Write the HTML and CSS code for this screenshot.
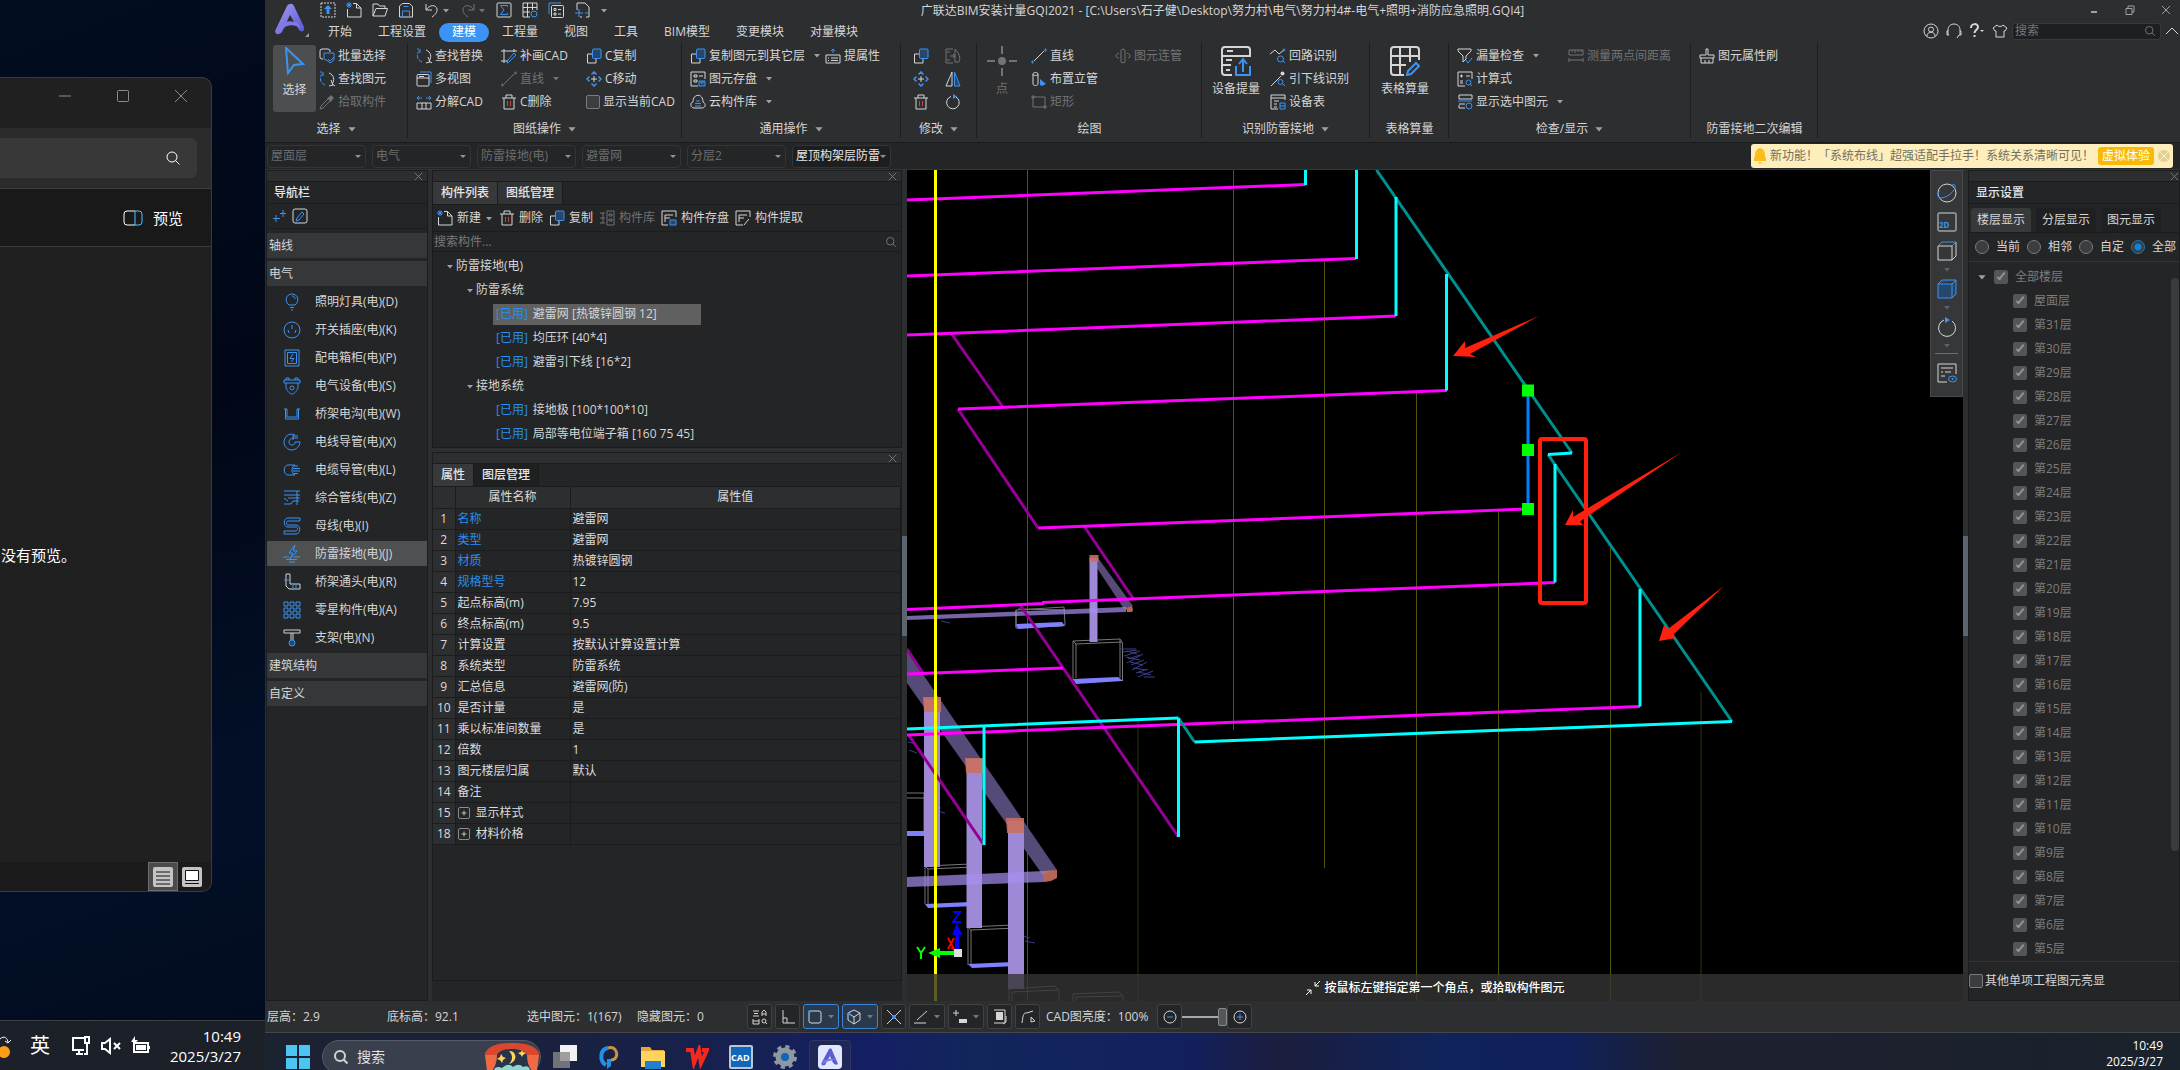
FILE: index.html
```html
<!DOCTYPE html>
<html lang="zh-CN">
<head>
    <meta charset="UTF-8">
    <meta name="viewport" content="width=device-width, initial-scale=1.0">
    <title>广联达BIM安装计量GQI2021</title>
    <link rel="stylesheet" href="styles.css">
</head>
<body>

    <!-- icon set -->
    <svg class="sprite" aria-hidden="true">
        <symbol id="i-caret" viewBox="0 0 8 5"><path class="fc" d="M1 1h6L4 4.500z"/></symbol>
        <symbol id="i-close" viewBox="0 0 16 16"><path d="M3 3l10 10M13 3L3 13"/></symbol>
        <symbol id="i-search" viewBox="0 0 16 16"><circle cx="7" cy="7" r="5"/><path d="M10.500 10.500l4 4"/></symbol>
        <symbol id="i-up" viewBox="0 0 16 16"><rect x="1" y="1" width="14" height="14" stroke-dasharray="2 1"/><path class="fb" d="M8 3l4 4H9.500v5h-3V7H4z"/></symbol>
        <symbol id="i-new" viewBox="0 0 16 16"><path d="M7 1.500h3.500L15 6v9H1.500V7M10.500 1.500V6H15"/><path class="b" d="M1 1l4 4M5 1L1 5M3 0v6M0 3h6"/></symbol>
        <symbol id="i-open" viewBox="0 0 16 16"><path d="M1 14V2h5l1.500 2H13v2.500M1 14l3-7.500h11.500L13 14z"/></symbol>
        <symbol id="i-save" viewBox="0 0 16 16"><path d="M1.500 15V4l3-2.500h7l3 3V15z"/><path class="b" d="M4.500 15V9h7v6M5.500 4.500h5"/></symbol>
        <symbol id="i-undo" viewBox="0 0 16 16"><path d="M2 2v6h6M2.500 7.500C5 3 12 2 13 7c.5 3-2 6-5 8"/></symbol>
        <symbol id="i-redo" viewBox="0 0 16 16"><path d="M14 2v6H8M13.500 7.500C11 3 4 2 3 7c-.5 3 2 6 5 8"/></symbol>
        <symbol id="i-sum" viewBox="0 0 16 16"><rect x="1" y="1" width="14" height="14" rx="1"/><path class="b" d="M11.500 5V3.500h-7L8 8l-3.500 4.500h7V11"/></symbol>
        <symbol id="i-grid" viewBox="0 0 16 16"><path d="M15 8V1H1v14h7M1 5.500h14M1 10h7M5.500 1v14M10.500 1v7"/><circle class="b" cx="12" cy="12" r="3"/></symbol>
        <symbol id="i-copylist" viewBox="0 0 16 16"><path class="b" d="M1 12V1h12"/><rect x="3.500" y="3.500" width="12" height="12" rx="1"/><path d="M6 6.500h2v2H6zM6 11h2v2H6zM10 7.500h3M10 12h3"/></symbol>
        <symbol id="i-addpage" viewBox="0 0 16 16"><path d="M3 8V1h8l4 4v10h-3M8 15H6"/><path class="b" d="M5 7v8M1 11h8M11 11h4"/></symbol>
        <symbol id="i-batch" viewBox="0 0 16 16"><path d="M4 11H3a2 2 0 0 1-2-2V3a2 2 0 0 1 2-2h6a2 2 0 0 1 2 2v1"/><path class="b" d="M5 5h10v7l-4 3-2-2-4-2zM9 11l2 2 4-4"/></symbol>
        <symbol id="i-find" viewBox="0 0 16 16"><path class="b" d="M6 14C1 12 0 7 3 3l1-1M4 5V1H1" stroke-dasharray="4 1"/><path d="M10 2c5 2 6 7 3 11l3 2M12 9l2 5-4 1"/></symbol>
        <symbol id="i-pick" viewBox="0 0 16 16"><path d="M9 5L2 12l-1 3 3-1 7-7"/><path class="fc" d="M8 4l4 4 1-2 2-2-3-3-2 2z"/></symbol>
        <symbol id="i-views" viewBox="0 0 16 16"><rect x="1" y="3.500" width="12" height="11.500" rx="1"/><path d="M1 7h12M3 5.500h5"/><path class="b" d="M4 1h11v11"/></symbol>
        <symbol id="i-split" viewBox="0 0 16 16"><path d="M1 9h14v6H1zM6 9v6M10 9v6"/><path class="b" d="M6 4H1M3 2L1 4l2 2M10 4h5M13 2l2 2-2 2"/></symbol>
        <symbol id="i-frame" viewBox="0 0 16 16"><path d="M3 1v14M0 3h16M13 1v3M0 13h7"/><path class="b" d="M13 5l2 2-7 7-2 1 1-3z"/></symbol>
        <symbol id="i-line" viewBox="0 0 16 16"><path d="M3 13L13 3"/><path class="b" d="M1 15h1v-2H1zM14 1h1v2h-1z"/></symbol>
        <symbol id="i-linegrey" viewBox="0 0 16 16"><path d="M3 13L13 3M1 15h1v-2H1zM14 1h1v2h-1z"/></symbol>
        <symbol id="i-del" viewBox="0 0 16 16"><path d="M1 4h14M3 4v11h10V4M5 4V1h6v3"/><path class="r" d="M6.500 7v5M9.500 7v5"/></symbol>
        <symbol id="i-copy" viewBox="0 0 16 16"><path d="M6 6H1.500v9H10v-4"/><rect class="b bf" x="6.500" y="1" width="8.500" height="9.500" rx="1"/></symbol>
        <symbol id="i-move" viewBox="0 0 16 16"><path d="M8 5v6M5 8h6"/><path class="b" stroke-width="1.500" d="M5.500 3.500L8 1l2.500 2.500M5.500 12.500L8 15l2.500-2.500M3.500 5.500L1 8l2.500 2.500M12.500 5.500L15 8l-2.500 2.500"/></symbol>
        <symbol id="i-store" viewBox="0 0 16 16"><path d="M15 8V1H1v14h7M4 4h3v2H4zM4 9h3v2H4zM9 5h4"/><path class="b bf" d="M9 10h6v5H9zM11 10v2h2v-2"/></symbol>
        <symbol id="i-cloud" viewBox="0 0 16 16"><path d="M4 14C0 14 0 8 3 8c0-9 10-9 10 0 3 1 3 6-1 6z"/><path class="b" d="M5 12h6M5 9.500h6M6 7h4"/></symbol>
        <symbol id="i-prop" viewBox="0 0 16 16"><path d="M1 7h14v8H1zM3 10h1M6 10h7M3 12.500h1M6 12.500h7"/><path class="b" d="M8 5V1M6 3l2-2 2 2"/></symbol>
        <symbol id="i-convert" viewBox="0 0 16 16"><path d="M8 1H1v14h7M5 8h5M8 6l2 2-2 2M2 4h3M2 12h3M10 1c4 4 6 9 4 13h-4V1z"/></symbol>
        <symbol id="i-mirror" viewBox="0 0 16 16"><path d="M7 1v14H1z"/><path class="b bf" d="M9.500 1v14H15z"/></symbol>
        <symbol id="i-rotate" viewBox="0 0 16 16"><path d="M6 2.500a6.300 6.300 0 1 0 5 .5"/><path class="fb" d="M8 0l4 2.500L8 5z"/></symbol>
        <symbol id="i-point" viewBox="0 0 30 30"><path d="M15 0v8M15 22v8M0 15h8M22 15h8"/><circle class="fc" cx="15" cy="15" r="4"/></symbol>
        <symbol id="i-riser" viewBox="0 0 16 16"><path d="M2 3c0-2 5-2 5 0v10c0 2-5 2-5 0zM2 3c0 2 5 2 5 0"/><path class="fb" d="M9 8l6 5-4 2-2-1z"/></symbol>
        <symbol id="i-rect" viewBox="0 0 16 16"><path d="M2 3h12v10H2zM1 2h2v2H1zM13 12h2v2h-2z"/></symbol>
        <symbol id="i-pipe" viewBox="0 0 16 16"><path d="M6 2c0-1 4-1 4 0v12c0 1-4 1-4 0zM4 5C0 6 0 10 4 10M12 5c4 1 4 5 1 5"/></symbol>
        <symbol id="i-device" viewBox="0 0 30 30"><path d="M11 29H4a3 3 0 0 1-3-3V4a3 3 0 0 1 3-3h22a3 3 0 0 1 3 3v7M1 10h28M1 19h9M6 5h6M5 14h6M5 24h4"/><path class="b" d="M15 20v9h14v-9M22 26V14M18 18l4-5 4 5"/></symbol>
        <symbol id="i-route" viewBox="0 0 16 16"><path d="M0 6l5-4 4 4 5-4"/><circle class="b" cx="14" cy="2" r="1"/><circle class="b" cx="10.500" cy="11" r="3"/><path class="b" d="M13 13l2 2"/></symbol>
        <symbol id="i-down" viewBox="0 0 16 16"><path d="M1 15L11 5"/><circle class="fc" cx="12.500" cy="2.500" r="2"/><circle class="b" cx="10.500" cy="11" r="2.500"/><path class="b" d="M13 13l2 2"/></symbol>
        <symbol id="i-sheet" viewBox="0 0 16 16"><path d="M15 6V1H1v14h7M1 4h14M4 7h5M4 10h3M4 13h3"/><path class="b" d="M10 9h5v6h-5zM10 12h5"/></symbol>
        <symbol id="i-table" viewBox="0 0 30 30"><path d="M29 14V4a3 3 0 0 0-3-3H4a3 3 0 0 0-3 3v22a3 3 0 0 0 3 3h10M1 10h28M1 19h15M10 1v28M20 1v15"/><path class="b" d="M26 17l3 3-8 8-4 1 1-4z"/></symbol>
        <symbol id="i-filter" viewBox="0 0 16 16"><path d="M1 1h13v2L9 8v3l-3 3V8L1 3z"/><path class="b" d="M9 12l2 3 4-5"/></symbol>
        <symbol id="i-calc" viewBox="0 0 16 16"><path d="M15 8V1H1v14h7M3 5h3M4.500 3.500v3M9 5h4M3 10h3M3 12h3"/><circle class="b" cx="11.500" cy="11.500" r="2.500"/><path class="b" d="M13 13l2 2"/></symbol>
        <symbol id="i-show" viewBox="0 0 16 16"><path d="M15 5H2V1h13zM8 10H2M8 14H2v-3"/><path class="b" d="M1 7h14"/><circle class="b" cx="12" cy="12" r="3"/></symbol>
        <symbol id="i-ruler" viewBox="0 0 16 16"><path d="M1 2h14v5H1zM4 2v2M7 2v3M10 2v2M13 2v2M1 12h14M1 10v4M15 10v4"/></symbol>
        <symbol id="i-brush" viewBox="0 0 16 16"><path d="M7 1h2v6h6v3H1V7h6zM2 10v5h12v-5M6 12v3M10 12v3"/></symbol>
        <symbol id="i-lib" viewBox="0 0 16 16"><path d="M8 1h7v14H8zM10 4h3v2h-3zM10 9h3v2h-3zM1 3h5M1 8h5M1 13h5M4 3v10"/></symbol>
        <symbol id="i-cstore" viewBox="0 0 16 16"><path d="M15 7V1H1v14h6M4 12V5h8M4 8h5"/><path class="b bf" d="M9 10h6v5H9z"/></symbol>
        <symbol id="i-cget" viewBox="0 0 16 16"><path d="M15 7V1H1v14h7M4 12V5h8M4 8h5M14 9l-5 6"/></symbol>
        <symbol id="i-plus2" viewBox="0 0 16 16"><path class="b" d="M5 7v7M2 10.500h7M12 2v7M9 5.500h6"/></symbol>
        <symbol id="i-edit" viewBox="0 0 16 16"><rect x="1" y="1" width="14" height="14" rx="2"/><path class="b" d="M10 4l2 2-5 6-3 1 1-3z"/></symbol>
        <symbol id="n-lamp" viewBox="0 0 18 18"><path d="M6 12C1 8 3 1 9 1s8 7 3 11zM7 14.500h4M8 17h2M9 3c2 0 3 1 3 3"/></symbol>
        <symbol id="n-socket" viewBox="0 0 18 18"><circle cx="9" cy="9" r="8"/><path d="M9 4v4M5 9l1 3M13 9l-1 3"/></symbol>
        <symbol id="n-box" viewBox="0 0 18 18"><path d="M2 1h14v16H2zM4.500 3.500h9v11h-9zM10 5L7 9.500h4L8 13"/></symbol>
        <symbol id="n-equip" viewBox="0 0 18 18"><path d="M1 3h16v3H1zM3 3V1h3v2M12 3V1h3v2M3 6v5c2 4 4 6 6 6s4-2 6-6V6"/><circle cx="9" cy="11" r="2"/></symbol>
        <symbol id="n-tray" viewBox="0 0 18 18"><path d="M1 4h3v8h10V4h3M2.500 4v10h13V4"/></symbol>
        <symbol id="n-wire" viewBox="0 0 18 18"><path d="M12 2C6-1 1 4 1 9s4 8 8 8 8-4 8-8h-5c0 2-1 3-3 3s-3-1-3-3 2-4 4-4h5M10 2v5M10 3h5"/></symbol>
        <symbol id="n-cable" viewBox="0 0 18 18"><path d="M12 4H5C0 4 0 14 5 14h7M12 4c-4 2-4 8 0 10M11 5h4M10 7.500h7M10 10h7M11 12.500h4"/></symbol>
        <symbol id="n-multi" viewBox="0 0 18 18"><path d="M1 2h16M1 6h16M5 9h12M1 9l4 3M1 15h7l2-3h6M14 2v14"/></symbol>
        <symbol id="n-bus" viewBox="0 0 18 18"><path d="M17 1H5C0 1 0 10 5 10h8c2 0 2 4 0 4H1v3h12c5 0 5-9 0-9H5C3 8 3 4 5 4h12z"/></symbol>
        <symbol id="n-bolt" viewBox="0 0 18 18"><path class="bf" d="M12 0L6 8h4l-3 6 7-8h-4z"/><path d="M0 12h6M11 12h6M3 14.500h11M6 17h6"/></symbol>
        <symbol id="n-elbow" viewBox="0 0 18 18"><path class="w" d="M3 5V1h4v10h10v5H6l-3-3z"/><path d="M1 7h7M10 10v7M13 11v5"/></symbol>
        <symbol id="n-parts" viewBox="0 0 18 18"><path d="M1 1h4v4H1zM7 1h4v4H7zM13 1h4v4h-4zM1 7h4v4H1zM7 7h4v4H7zM13 7h4v4h-4zM1 13h4v4H1zM7 13h4v4H7zM13 13h4v4h-4z"/></symbol>
        <symbol id="n-hanger" viewBox="0 0 18 18"><path class="w" d="M1 1h16v3H1zM8 4v7M10 4v7"/><circle class="bf" cx="9" cy="14" r="3"/></symbol>
    </svg>

    <div class="desktop">

        <!-- side monitor -->
        <div class="side-screen">
            <section class="preview-window">
                <header class="pw-title">
                    <button aria-label="最小化"><svg class="icon"><path d="M2 8h12"/></svg></button>
                    <button aria-label="最大化"><svg class="icon"><rect x="2.500" y="2.500" width="11" height="11" rx="1"/></svg></button>
                    <button aria-label="关闭"><svg class="icon"><path d="M2 2l12 12M14 2L2 14"/></svg></button>
                </header>
                <div class="pw-search">
                    <label class="pw-box"><input type="text" aria-label="搜索文件"><svg class="icon"><use href="#i-search"/></svg></label>
                </div>
                <div class="pw-bar">
                    <button class="pw-preview"><svg viewBox="0 0 20 16"><path d="M12 1H4a3 3 0 0 0-3 3v8a3 3 0 0 0 3 3h8"/><path class="cy" d="M12 1h4a3 3 0 0 1 3 3v8a3 3 0 0 1-3 3h-4z"/></svg>预览</button>
                </div>
                <p class="pw-empty">没有预览。</p>
                <footer class="pw-foot">
                    <button class="on" aria-label="详细信息"><svg viewBox="0 0 20 20"><rect class="pg" width="20" height="20" rx="2"/><path d="M3 5h14M3 9h14M3 13h14M3 17h14"/></svg></button>
                    <button aria-label="大图标"><svg viewBox="0 0 20 20"><rect class="pg" width="20" height="20" rx="2"/><path class="pw" d="M3.500 3.500h13v10h-13z"/><path d="M3 16.500h14"/></svg></button>
                </footer>
            </section>
            <div class="side-taskbar">
                <svg class="sync" viewBox="0 0 12 24"><path d="M0 5c4-4 8-1 8 4M5 7l3 2 3-3"/><circle cx="4" cy="18" r="6"/></svg>
                <span class="ime">英</span>
                <svg class="tray" viewBox="0 0 20 20"><path d="M13 2H2v12h11M5 18h7M8 14v4M14 1h4v6h-4zM16 7v11h-3"/></svg>
                <svg class="tray" viewBox="0 0 20 20"><path d="M1 7h3l5-4v14l-5-4H1zM13 7l6 6M19 7l-6 6"/></svg>
                <svg class="tray" viewBox="0 0 20 20"><path d="M3 7h14v9H3zM18 10v3"/><path class="solid" d="M5 9h10v5H5zM4 0L0 6h3L2 10l5-6H4z"/></svg>
                <time class="side-clock">10:49<br>2025/3/27</time>
            </div>
        </div>

        <!-- main application -->
        <div class="main-screen">
            <div class="app">
                <header class="topbar">
                    <svg class="logo" viewBox="0 0 36 36">
                        <defs><linearGradient id="lg" x1="0" y1="0" x2="1" y2="1"><stop offset="0" stop-color="#a99af0"/><stop offset="1" stop-color="#5456d6"/></linearGradient></defs>
                        <path fill="url(#lg)" d="M13 3c2-3 6-3 7 0l10 21c1 4-2 6-5 3L16 12 8 29c-3 4-9 2-6-3z"/>
                        <path fill="#7f78e6" d="M3 24c7-6 14-7 21-4l3 5c-8-4-15-4-21 4z"/>
                        <path fill="#999" d="M35 30v4h-4z"/>
                    </svg>
                    <div class="quick">
                        <button aria-label="上传"><svg class="icon"><use href="#i-up"/></svg></button>
                        <button aria-label="新建"><svg class="icon"><use href="#i-new"/></svg></button>
                        <button aria-label="打开"><svg class="icon"><use href="#i-open"/></svg></button>
                        <button aria-label="保存"><svg class="icon"><use href="#i-save"/></svg></button>
                        <button aria-label="撤销"><svg class="icon"><use href="#i-undo"/></svg><svg class="caret"><use href="#i-caret"/></svg></button>
                        <button aria-label="恢复" class="off"><svg class="icon"><use href="#i-redo"/></svg><svg class="caret"><use href="#i-caret"/></svg></button>
                        <button aria-label="汇总"><svg class="icon"><use href="#i-sum"/></svg></button>
                        <button aria-label="报表"><svg class="icon"><use href="#i-grid"/></svg></button>
                        <button aria-label="列表"><svg class="icon"><use href="#i-copylist"/></svg></button>
                        <button aria-label="添加"><svg class="icon"><use href="#i-addpage"/></svg></button>
                        <button aria-label="自定义快速访问"><svg class="caret"><use href="#i-caret"/></svg></button>
                    </div>
                    <h1 class="app-title">广联达BIM安装计量GQI2021 - [C:\Users\石子健\Desktop\努力村\电气\努力村4#-电气+照明+消防应急照明.GQI4]</h1>
                    <div class="win-btns">
                        <button aria-label="最小化"><svg viewBox="0 0 10 10"><path d="M2 7h6" stroke-width="2"/></svg></button>
                        <button aria-label="还原"><svg viewBox="0 0 10 10"><path d="M3 3V1h6v6H7M1 3.500h6v6H1z"/></svg></button>
                        <button aria-label="关闭"><svg viewBox="0 0 10 10"><path d="M1 1l8 8M9 1L1 9"/></svg></button>
                    </div>
                    <nav class="tabs">
                        <button>开始</button>
                        <button>工程设置</button>
                        <button class="active">建模</button>
                        <button>工程量</button>
                        <button>视图</button>
                        <button>工具</button>
                        <button>BIM模型</button>
                        <button>变更模块</button>
                        <button>对量模块</button>
                    </nav>
                    <div class="utils">
                        <button aria-label="账户"><svg class="icon"><circle cx="8" cy="8" r="7"/><circle cx="8" cy="6.500" r="2.500"/><path d="M4 13c0-5 8-5 8 0"/></svg></button>
                        <button aria-label="客服"><svg class="icon"><path d="M2 12V7c0-8 12-8 12 0v5M2 8H1v4h2M14 8h1v4h-2l-2 3"/></svg></button>
                        <button aria-label="帮助"><svg class="icon"><path d="M2 5c0-5 7-5 7-1 0 3-3.500 3-3.500 6M5.500 12v2" stroke-width="2"/><path class="fc" d="M11 7h4l-2 2z"/></svg></button>
                        <button aria-label="皮肤"><svg class="icon"><path d="M5 2c1 2 5 2 6 0l4 3-2 3h-1v6H4V8H3L1 5z"/></svg></button>
                        <label class="app-search"><input type="text" placeholder="搜索" aria-label="搜索"><svg class="icon" viewBox="0 0 16 16"><use href="#i-search"/></svg></label>
                        <button aria-label="折叠"><svg class="icon"><path d="M2 11l6-6 6 6"/></svg></button>
                    </div>
                </header>

                <div class="ribbon">
                    <section class="group g-select">
                        <div class="tools">
                            <button class="big active"><svg class="cursor" viewBox="0 0 30 30"><path d="M6 1l17 16-9 1-6 8z"/></svg>选择</button>
                            <button><svg class="icon"><use href="#i-batch"/></svg>批量选择</button>
                            <button><svg class="icon"><use href="#i-find"/></svg>查找图元</button>
                            <button class="off"><svg class="icon"><use href="#i-pick"/></svg>拾取构件</button>
                        </div>
                        <h2>选择<svg class="caret lg"><use href="#i-caret"/></svg></h2>
                    </section>
                    <section class="group g-draw">
                        <div class="tools">
                            <button><svg class="icon"><use href="#i-find"/></svg>查找替换</button>
                            <button><svg class="icon"><use href="#i-views"/></svg>多视图</button>
                            <button><svg class="icon"><use href="#i-split"/></svg>分解CAD</button>
                            <button><svg class="icon"><use href="#i-frame"/></svg>补画CAD</button>
                            <button class="off"><svg class="icon"><use href="#i-linegrey"/></svg>直线<svg class="caret"><use href="#i-caret"/></svg></button>
                            <button><svg class="icon"><use href="#i-del"/></svg>C删除</button>
                            <button><svg class="icon"><use href="#i-copy"/></svg>C复制</button>
                            <button><svg class="icon"><use href="#i-move"/></svg>C移动</button>
                            <label class="check"><input type="checkbox">显示当前CAD</label>
                        </div>
                        <h2>图纸操作<svg class="caret lg"><use href="#i-caret"/></svg></h2>
                    </section>
                    <section class="group g-common">
                        <div class="tools">
                            <button><svg class="icon"><use href="#i-copy"/></svg>复制图元到其它层<svg class="caret"><use href="#i-caret"/></svg></button>
                            <button><svg class="icon"><use href="#i-store"/></svg>图元存盘<svg class="caret"><use href="#i-caret"/></svg></button>
                            <button><svg class="icon"><use href="#i-cloud"/></svg>云构件库<svg class="caret"><use href="#i-caret"/></svg></button>
                            <button><svg class="icon"><use href="#i-prop"/></svg>提属性</button>
                        </div>
                        <h2>通用操作<svg class="caret lg"><use href="#i-caret"/></svg></h2>
                    </section>
                    <section class="group g-modify">
                        <div class="tools">
                            <button aria-label="复制"><svg class="icon"><use href="#i-copy"/></svg></button>
                            <button aria-label="移动"><svg class="icon"><use href="#i-move"/></svg></button>
                            <button aria-label="删除"><svg class="icon"><use href="#i-del"/></svg></button>
                            <button aria-label="转换" class="off"><svg class="icon"><use href="#i-convert"/></svg></button>
                            <button aria-label="镜像"><svg class="icon"><use href="#i-mirror"/></svg></button>
                            <button aria-label="旋转"><svg class="icon"><use href="#i-rotate"/></svg></button>
                        </div>
                        <h2>修改<svg class="caret lg"><use href="#i-caret"/></svg></h2>
                    </section>
                    <section class="group g-paint">
                        <div class="tools">
                            <button class="big off"><svg><use href="#i-point"/></svg>点</button>
                            <button><svg class="icon"><use href="#i-line"/></svg>直线</button>
                            <button><svg class="icon"><use href="#i-riser"/></svg>布置立管</button>
                            <button class="off"><svg class="icon"><use href="#i-rect"/></svg>矩形</button>
                            <button class="off"><svg class="icon"><use href="#i-pipe"/></svg>图元连管</button>
                        </div>
                        <h2>绘图</h2>
                    </section>
                    <section class="group g-detect">
                        <div class="tools">
                            <button class="big"><svg><use href="#i-device"/></svg>设备提量</button>
                            <button><svg class="icon"><use href="#i-route"/></svg>回路识别</button>
                            <button><svg class="icon"><use href="#i-down"/></svg>引下线识别</button>
                            <button><svg class="icon"><use href="#i-sheet"/></svg>设备表</button>
                        </div>
                        <h2>识别防雷接地<svg class="caret lg"><use href="#i-caret"/></svg></h2>
                    </section>
                    <section class="group g-table">
                        <div class="tools">
                            <button class="big"><svg><use href="#i-table"/></svg>表格算量</button>
                        </div>
                        <h2>表格算量</h2>
                    </section>
                    <section class="group g-check">
                        <div class="tools">
                            <button><svg class="icon"><use href="#i-filter"/></svg>漏量检查<svg class="caret"><use href="#i-caret"/></svg></button>
                            <button><svg class="icon"><use href="#i-calc"/></svg>计算式</button>
                            <button><svg class="icon"><use href="#i-show"/></svg>显示选中图元<svg class="caret"><use href="#i-caret"/></svg></button>
                            <button class="off"><svg class="icon"><use href="#i-ruler"/></svg>测量两点间距离</button>
                        </div>
                        <h2>检查/显示<svg class="caret lg"><use href="#i-caret"/></svg></h2>
                    </section>
                    <section class="group g-brush">
                        <div class="tools">
                            <button><svg class="icon"><use href="#i-brush"/></svg>图元属性刷</button>
                        </div>
                        <h2>防雷接地二次编辑</h2>
                    </section>
                </div>

                <div class="context">
                    <div class="combo"><select aria-label="楼层" disabled><option>屋面层</option></select></div>
                    <div class="combo"><select aria-label="专业" disabled><option>电气</option></select></div>
                    <div class="combo"><select aria-label="构件类型" disabled><option>防雷接地(电)</option></select></div>
                    <div class="combo"><select aria-label="构件" disabled><option>避雷网</option></select></div>
                    <div class="combo"><select aria-label="分层" disabled><option>分层2</option></select></div>
                    <div class="combo"><select aria-label="图纸"><option>屋顶构架层防雷</option></select></div>
                    <div class="notice">
                        <svg class="bell" viewBox="0 0 12 16"><path d="M6 0c4 1 5 4 5 8l1 3v2H0v-2l1-3c0-4 1-7 5-8zM4 14h4l-2 2z"/></svg>
                        <span>新功能！「系统布线」超强适配手拉手！系统关系清晰可见！</span>
                        <button class="try">虚拟体验</button>
                        <button class="dismiss" aria-label="关闭"><svg class="icon" viewBox="0 0 16 16"><use href="#i-close"/></svg></button>
                    </div>
                </div>

                <main class="work">
                    <aside class="panel nav">
                        <div class="strip"><button aria-label="关闭"><svg class="icon" viewBox="2 2 12 12"><path d="M3 3l10 10M13 3L3 13"/></svg></button></div>
                        <h2 class="panel-title">导航栏</h2>
                        <div class="nav-tools">
                            <button aria-label="展开"><svg class="icon"><use href="#i-plus2"/></svg></button>
                            <button aria-label="编辑"><svg class="icon"><use href="#i-edit"/></svg></button>
                        </div>
                        <div class="nav-list">
                            <button class="cat">轴线</button>
                            <button class="cat">电气</button>
                            <button><svg><use href="#n-lamp"/></svg>照明灯具(电)(D)</button>
                            <button><svg><use href="#n-socket"/></svg>开关插座(电)(K)</button>
                            <button><svg><use href="#n-box"/></svg>配电箱柜(电)(P)</button>
                            <button><svg><use href="#n-equip"/></svg>电气设备(电)(S)</button>
                            <button><svg><use href="#n-tray"/></svg>桥架电沟(电)(W)</button>
                            <button><svg><use href="#n-wire"/></svg>电线导管(电)(X)</button>
                            <button><svg><use href="#n-cable"/></svg>电缆导管(电)(L)</button>
                            <button><svg><use href="#n-multi"/></svg>综合管线(电)(Z)</button>
                            <button><svg><use href="#n-bus"/></svg>母线(电)(I)</button>
                            <button class="active"><svg><use href="#n-bolt"/></svg>防雷接地(电)(J)</button>
                            <button><svg><use href="#n-elbow"/></svg>桥架通头(电)(R)</button>
                            <button><svg><use href="#n-parts"/></svg>零星构件(电)(A)</button>
                            <button><svg><use href="#n-hanger"/></svg>支架(电)(N)</button>
                            <button class="cat">建筑结构</button>
                            <button class="cat">自定义</button>
                        </div>
                    </aside>

                    <div class="middle">
                        <section class="panel components">
                            <div class="strip"><button aria-label="关闭"><svg class="icon" viewBox="2 2 12 12"><path d="M3 3l10 10M13 3L3 13"/></svg></button></div>
                            <div class="panel-tabs"><button class="active">构件列表</button><button class="second">图纸管理</button></div>
                            <div class="comp-tools">
                                <button class="new"><svg class="icon"><use href="#i-new"/></svg>新建<svg class="caret"><use href="#i-caret"/></svg></button>
                                <button><svg class="icon"><use href="#i-del"/></svg>删除</button>
                                <button><svg class="icon"><use href="#i-copy"/></svg>复制</button>
                                <button class="off"><svg class="icon"><use href="#i-lib"/></svg>构件库</button>
                                <button><svg class="icon"><use href="#i-cstore"/></svg>构件存盘</button>
                                <button><svg class="icon"><use href="#i-cget"/></svg>构件提取</button>
                            </div>
                            <label class="comp-search"><input type="text" placeholder="搜索构件..." aria-label="搜索构件"><svg class="icon" viewBox="0 0 16 16"><use href="#i-search"/></svg></label>
                            <ul class="tree">
                                <li class="l1"><svg class="caret"><use href="#i-caret"/></svg>防雷接地(电)</li>
                                <li class="l2"><svg class="caret"><use href="#i-caret"/></svg>防雷系统</li>
                                <li class="l3"><span class="node active"><i>[已用]</i>避雷网 [热镀锌圆钢 12]</span></li>
                                <li class="l3"><span class="node"><i>[已用]</i>均压环 [40*4]</span></li>
                                <li class="l3"><span class="node"><i>[已用]</i>避雷引下线 [16*2]</span></li>
                                <li class="l2"><svg class="caret"><use href="#i-caret"/></svg>接地系统</li>
                                <li class="l3"><span class="node"><i>[已用]</i>接地极 [100*100*10]</span></li>
                                <li class="l3"><span class="node"><i>[已用]</i>局部等电位端子箱 [160 75 45]</span></li>
                            </ul>
                        </section>
                        <section class="panel props">
                            <div class="strip"><button aria-label="关闭"><svg class="icon" viewBox="2 2 12 12"><path d="M3 3l10 10M13 3L3 13"/></svg></button></div>
                            <div class="panel-tabs"><button class="active">属性</button><button>图层管理</button></div>
                            <table>
                                <thead>
                                    <tr><th class="num"></th><th class="name">属性名称</th><th>属性值</th></tr>
                                </thead>
                                <tbody>
                                    <tr class="key"><th>1</th><td>名称</td><td>避雷网</td></tr>
                                    <tr class="key"><th>2</th><td>类型</td><td>避雷网</td></tr>
                                    <tr class="key"><th>3</th><td>材质</td><td>热镀锌圆钢</td></tr>
                                    <tr class="key"><th>4</th><td>规格型号</td><td>12</td></tr>
                                    <tr><th>5</th><td>起点标高(m)</td><td>7.95</td></tr>
                                    <tr><th>6</th><td>终点标高(m)</td><td>9.5</td></tr>
                                    <tr><th>7</th><td>计算设置</td><td>按默认计算设置计算</td></tr>
                                    <tr><th>8</th><td>系统类型</td><td>防雷系统</td></tr>
                                    <tr><th>9</th><td>汇总信息</td><td>避雷网(防)</td></tr>
                                    <tr><th>10</th><td>是否计量</td><td>是</td></tr>
                                    <tr><th>11</th><td>乘以标准间数量</td><td>是</td></tr>
                                    <tr><th>12</th><td>倍数</td><td>1</td></tr>
                                    <tr><th>13</th><td>图元楼层归属</td><td>默认</td></tr>
                                    <tr><th>14</th><td>备注</td><td></td></tr>
                                    <tr><th>15</th><td><button class="expand" aria-label="展开"><svg viewBox="0 0 12 12"><path d="M3 6h6M6 3v6"/></svg></button>显示样式</td><td></td></tr>
                                    <tr><th>18</th><td><button class="expand" aria-label="展开"><svg viewBox="0 0 12 12"><path d="M3 6h6M6 3v6"/></svg></button>材料价格</td><td></td></tr>
                                </tbody>
                            </table>
                        </section>
                    </div>

                    <div class="splitter"></div>

                    <div class="canvas">
                        <!-- model space, drawn in screen units -->
                        <svg class="scene" viewBox="907 169 1056 832" preserveAspectRatio="xMinYMin slice">
                            <g class="axis">
                                <path d="M1027.500 169V1001M1233.500 169V729M1324.500 260V867M1416.500 392V1001M1498.500 508V1001M1610.500 547V1001"/>
                                <path class="dim" d="M1138 720V1001M1701 691V1001"/>
                            </g>
                            <g class="wire">
                                <path d="M1016 609l48-3 1 18-3 1-46 2zM1016 609v17M1018 608l47 1"/>
                                <path d="M1073 640l47-2 2.500 4v38M1073 640v40M1076 643v34M1073 640l3 3 46-2M1120 638v39"/>
                                <path d="M907 792h17v39M907 797h19v33M924 792l2 5"/>
                                <path d="M925 865l46-2 4 3v39M925 865v38M928 868v36M925 865l3 3 46-2M971 863v38"/>
                                <path d="M968 926l45-2 4 3v38M968 926v38M971 929v36M968 926l3 3 46-2M1013 924v38"/>
                                <path d="M1009 1001v-13l46-3 4 4v12M1012 1001v-10l46-2M1073 1001v-8l46-2 4 4v6M1076 1001v-5l46-1"/>
                            </g>
                            <g class="base">
                                <path d="M1016 623l46-2 3 4-47 3zM1073 678l45-2 5 4-47 3zM907 830h19v5h-19zM925 903l45-2 5 4-47 2zM968 963l45-2 4 4-45 2z"/>
                            </g>
                            <g class="scribble">
                                <path d="M1119 648h17M1123 651l14-2M1124 655l16-5M1128 658l12-4M1127 662l16-9M1131 664l13-5M1132 669l15-8M1136 672l12-4M1138 676l15-6M1144 676h11M1127 650l10 3M1126 656l14 3M1130 661l13 3M1133 667l14 2M1138 671l13 3M941 620l9 2M908 741l8 2M909 749l8 3M932 806l9 1M937 810l8 2M1022 935l8 2M1025 940l10 2"/>
                            </g>
                            <path class="beam" d="M907 650L1057 869 1042 873 907 682z"/>
                            <path class="beam" d="M1098 557L1133 605 1124 608 1097 567z"/>
                            <path class="pipe" d="M1089.500 557h8v84h-8zM924 698h16v168h-16zM966.500 758h15.500v169h-15.500zM1008 820h16v168h-16z"/>
                            <path class="pipe clear" d="M907 615l219-9v5l-219 8zM907 876l137-6v11l-137 5z"/>
                            <path class="joint" d="M1089.500 554h9v7h-9zM1126 607l6-2 1 4-1 2h-5zM923 696h18v15h-17zM965 757h18v15h-17zM1006 817h18v15h-17zM1043 870l14-1v8l-6 3-7 1z"/>
                            <g class="dark-line">
                                <path d="M951 332L1003.500 407M958 408L1038 527M1084 525L1133.500 598M1019.500 603L1178.500 836M907 648L923 672M908 733L984 844"/>
                            </g>
                            <g class="magenta">
                                <path d="M907 199L1305.500 183.500M907 275L1356 257.500M907 334L1396 315M958 408L1447 389.500M1038 527L1528 508M907 608.500L1044 602.500M1042 601.500L1555 581.500M907 673L1063 667M907 734L1640 705.500"/>
                            </g>
                            <g class="teal">
                                <path d="M1376.500 169L1572 452M1548 453.500L1732 720.500M1178.500 717L1194.500 741"/>
                            </g>
                            <g class="cyan">
                                <path d="M1305.500 169V184M1356.500 169V258M1396 196V315M1446.500 273V389.500M1555 463V581.500M1640 588V705.500M984 726V844M1178.500 717V836"/>
                                <path d="M907 728L1178.500 717M1194.500 741L1732 720.500M1548 453.500L1572 452"/>
                            </g>
                            <path class="yellow" d="M935.500 169V1001"/>
                            <path class="picked" d="M1528 390V508"/>
                            <path class="grip" d="M1522 383.500h12v12h-12zM1522 443h12v12h-12zM1522 502h12v12h-12z"/>
                            <rect class="mark" x="1540" y="438" width="46" height="164" rx="2"/>
                            <g class="arrow">
                                <path d="M1453 355L1465 340V347L1539 315 1470 353 1476 356z"/>
                                <path d="M1565 524L1573 509V516L1682 451 1580 520.500 1583 524z"/>
                                <path d="M1659 640L1664 624 1668 628 1724 585 1673 634 1676 637z"/>
                            </g>
                            <g class="gizmo">
                                <path stroke="#f00" stroke-width="2" d="M956 950l-5-3M948 937l6 11M954 937l-6 11"/>
                                <path stroke="#00f" stroke-width="4" d="M957 948V932"/><path fill="#00f" d="M952 934l5-12 5 12z"/>
                                <path stroke="#0f0" stroke-width="4" d="M954 952H938"/><path fill="#0f0" d="M940 947l-12 5 12 5z"/>
                                <rect x="954" y="948" width="8" height="8" fill="#ddd"/>
                                <path stroke="#00f" stroke-width="2" d="M953 911h7l-7 10h8"/>
                                <path stroke="#0f0" stroke-width="2" d="M917 946l4 6 4-6M921 952v6"/>
                            </g>
                        </svg>
                        <div class="viewtools">
                            <button aria-label="动态观察"><svg viewBox="0 0 20 20"><circle cx="10" cy="10" r="9"/><path class="b" d="M2 8C-2 17 6 16 12 12s9-12 3-10"/></svg></button>
                            <button aria-label="二维"><svg viewBox="0 0 20 20"><rect x="1" y="1" width="18" height="18" rx="1"/><text x="2" y="16">2D</text></svg></button>
                            <button aria-label="视角"><svg viewBox="0 0 20 20"><path d="M1 5h14v14H1zM15 19l4-4V1"/><path class="b" d="M1 5l4-4h14l-4 4"/></svg></button>
                            <svg class="caret"><use href="#i-caret"/></svg>
                            <button aria-label="显示样式"><svg viewBox="0 0 20 20"><path class="b bf" d="M1 5h14v14H1zM15 19l4-4V1L15 5M1 5l4-4h14"/></svg></button>
                            <svg class="caret"><use href="#i-caret"/></svg>
                            <button aria-label="旋转"><svg viewBox="0 0 20 20"><path d="M7 3a8.500 8.500 0 1 0 8 1"/><path class="fb" d="M8 0l5 3-5 3z"/></svg></button>
                            <svg class="caret"><use href="#i-caret"/></svg>
                            <hr>
                            <button aria-label="图元属性"><svg viewBox="0 0 20 20"><path d="M19 11V1H1v18h9M4 5h12M4 9h2M8 9h6M4 13h4"/><ellipse class="b" cx="15.500" cy="16" rx="4" ry="3"/><circle class="fb" cx="15.500" cy="16" r="1"/></svg></button>
                        </div>
                        <div class="prompt"><svg class="icon"><path d="M15 1l-5 5M10 2v4h4M1 15l5-5M2 10h4v4"/></svg>按鼠标左键指定第一个角点，或拾取构件图元</div>
                    </div>

                    <div class="splitter"></div>

                    <aside class="panel display">
                        <div class="strip"><button aria-label="关闭"><svg class="icon" viewBox="2 2 12 12"><path d="M3 3l10 10M13 3L3 13"/></svg></button></div>
                        <h2 class="panel-title">显示设置</h2>
                        <div class="display-tabs"><button class="active">楼层显示</button><button>分层显示</button><button>图元显示</button></div>
                        <div class="radios">
                            <label><input type="radio" name="range">当前</label>
                            <label><input type="radio" name="range">相邻</label>
                            <label><input type="radio" name="range">自定</label>
                            <label><input type="radio" name="range" checked>全部</label>
                        </div>
                        <div class="floors">
                            <label class="root"><svg class="caret lg"><use href="#i-caret"/></svg><input type="checkbox" checked disabled>全部楼层</label>
                            <label><input type="checkbox" checked disabled>屋面层</label>
                            <label><input type="checkbox" checked disabled>第31层</label>
                            <label><input type="checkbox" checked disabled>第30层</label>
                            <label><input type="checkbox" checked disabled>第29层</label>
                            <label><input type="checkbox" checked disabled>第28层</label>
                            <label><input type="checkbox" checked disabled>第27层</label>
                            <label><input type="checkbox" checked disabled>第26层</label>
                            <label><input type="checkbox" checked disabled>第25层</label>
                            <label><input type="checkbox" checked disabled>第24层</label>
                            <label><input type="checkbox" checked disabled>第23层</label>
                            <label><input type="checkbox" checked disabled>第22层</label>
                            <label><input type="checkbox" checked disabled>第21层</label>
                            <label><input type="checkbox" checked disabled>第20层</label>
                            <label><input type="checkbox" checked disabled>第19层</label>
                            <label><input type="checkbox" checked disabled>第18层</label>
                            <label><input type="checkbox" checked disabled>第17层</label>
                            <label><input type="checkbox" checked disabled>第16层</label>
                            <label><input type="checkbox" checked disabled>第15层</label>
                            <label><input type="checkbox" checked disabled>第14层</label>
                            <label><input type="checkbox" checked disabled>第13层</label>
                            <label><input type="checkbox" checked disabled>第12层</label>
                            <label><input type="checkbox" checked disabled>第11层</label>
                            <label><input type="checkbox" checked disabled>第10层</label>
                            <label><input type="checkbox" checked disabled>第9层</label>
                            <label><input type="checkbox" checked disabled>第8层</label>
                            <label><input type="checkbox" checked disabled>第7层</label>
                            <label><input type="checkbox" checked disabled>第6层</label>
                            <label><input type="checkbox" checked disabled>第5层</label>
                        </div>
                        <label class="check other"><input type="checkbox">其他单项工程图元亮显</label>
                    </aside>
                </main>

                <footer class="status">
                    <span class="s1">层高：2.9</span>
                    <span class="s2">底标高：92.1</span>
                    <span class="s3">选中图元：1(167)</span>
                    <span class="s3">隐藏图元：0</span>
                    <div class="modes">
                        <button aria-label="文字查找"><svg class="icon"><path d="M1 2h6M2 4.500h4M1 7h6M10 7V3l2-2 2 2v4M10 5h4M1 10v5h6v-5M1 12h6"/><circle cx="12" cy="12" r="2"/><path d="M13 13l2 2"/></svg></button>
                        <button aria-label="正交"><svg class="icon"><path d="M3 1v13h12M3 9h4v5"/></svg></button>
                        <button aria-label="选择框" class="on wide"><svg class="icon"><rect x="2" y="2" width="12" height="12" rx="2"/><circle class="fb" cx="2.500" cy="2.500" r="1.500"/></svg><svg class="caret"><use href="#i-caret"/></svg></button>
                        <button aria-label="三维捕捉" class="on wide"><svg class="icon"><path d="M8 1l6 3v7l-6 4-6-4V4zM8 8v7M8 8l6-4M8 8L2 4"/><circle class="fb" cx="2.500" cy="5" r="1.500"/></svg><svg class="caret"><use href="#i-caret"/></svg></button>
                        <button aria-label="交点"><svg class="icon"><path d="M1 1l14 14M15 1L1 15"/><circle class="fb" cx="8" cy="8" r="2"/></svg></button>
                        <button aria-label="角度" class="wide"><svg class="icon"><path d="M14 2L4 11M1 14h12"/></svg><svg class="caret"><use href="#i-caret"/></svg></button>
                        <button aria-label="动态输入" class="wide"><svg class="icon"><path d="M4 1v6M1 4h6"/><path class="fc" d="M7 10h8v4H7z"/></svg><svg class="caret"><use href="#i-caret"/></svg></button>
                        <button aria-label="剪贴"><svg class="icon"><path class="fc" d="M4 3h7v8H4z"/><path d="M2 1h11v13H2M14 7v6l-3 2"/></svg></button>
                        <button aria-label="折线"><svg class="icon"><path d="M2 14C3 8 3 3 7 4l6-2M11 8l4 4-4 1z"/></svg></button>
                    </div>
                    <label for="bright">CAD图亮度：100%</label>
                    <div class="zoomer">
                        <button aria-label="降低"><svg class="icon"><circle cx="8" cy="8" r="6"/><path class="b" d="M5 8h6"/></svg></button>
                        <input type="range" id="bright" min="0" max="100" value="100">
                        <button aria-label="提高"><svg class="icon"><circle cx="8" cy="8" r="6"/><path class="b" d="M5 8h6M8 5v6"/></svg></button>
                    </div>
                </footer>
            </div>

            <div class="taskbar">
                <button aria-label="开始"><svg viewBox="0 0 24 24"><path fill="#4cc5f5" d="M0 0h11v11H0zM13 0h11v11H13zM0 13h11v11H0zM13 13h11v11H13z"/></svg></button>
                <label class="task-search">
                    <svg class="icon"><use href="#i-search"/></svg>
                    <input type="text" placeholder="搜索" aria-label="任务栏搜索">
                    <svg class="doodle" viewBox="0 0 54 28">
                        <path fill="#2a3448" d="M8 3h38v25H8z"/><path fill="#d9472e" d="M0 10C4 2 14 0 27 0s23 2 27 10v4H43c-2-6-8-8-16-8s-14 2-16 8H0z"/>
                        <path fill="#ee6a45" d="M0 12h12c0 7-2 12-5 16H2zM54 12H42c0 7 2 12 5 16h5z"/>
                        <path fill="#8fd6d0" d="M9 28c0-4 4-5 8-3 5-4 8-4 11-1 4-3 7-3 10 0 4-2 7 0 7 4z"/>
                        <path fill="#ffd55a" d="M24 8c7-1 10 10 0 13 4-4 4-9 0-13zM16 11l2 3 3 1-3 2-1 3-2-3-3-1 3-2zM37 7l1 2 3 1-3 2-1 2-1-2-3-2 3-1z"/>
                    </svg>
                </label>
                <button aria-label="任务视图"><svg viewBox="0 0 24 24"><path fill="#f2f2f2" d="M7 0h17v16H7z"/><path fill="#888" fill-opacity=".8" d="M0 7h17v16H0z"/></svg></button>
                <button aria-label="助手"><svg viewBox="0 0 24 24"><path fill="none" stroke="#1e90e8" stroke-width="4" d="M9 20C2 16 3 4 11 3"/><path fill="none" stroke="#c69442" stroke-width="3" d="M11 3c10-3 12 12 3 12"/><path fill="#1e90e8" d="M10 14h4v7l-4 3z"/></svg></button>
                <button aria-label="文件资源管理器"><svg viewBox="0 0 24 24"><path fill="#e8a33a" d="M0 2h9l2 3h12v4H0z"/><path fill="#ffd35c" d="M0 6h24v16H0z"/><path fill="#1f7fd0" d="M4 16h16v8H4z"/></svg></button>
                <button aria-label="WPS"><svg viewBox="0 0 24 24"><path fill="none" stroke="#f5281e" stroke-width="4" d="M1 5h6l2 13 5-13 2 13 6-13h-5"/></svg></button>
                <button aria-label="CAD"><svg viewBox="0 0 24 24"><rect width="24" height="24" rx="2" fill="#b7c7d6"/><rect x="2" y="2" width="20" height="20" fill="#1267b8"/><text x="2" y="16" fill="#fff" font-size="9" font-weight="bold">CAD</text></svg></button>
                <button aria-label="设置"><svg viewBox="0 0 24 24"><circle cx="12" cy="12" r="10" fill="none" stroke="#8d98a3" stroke-width="4" stroke-dasharray="4 3.850"/><circle cx="12" cy="12" r="6.500" fill="none" stroke="#8d98a3" stroke-width="6"/><circle cx="12" cy="12" r="4" fill="#1166b8"/></svg></button>
                <button class="active" aria-label="广联达"><svg viewBox="0 0 24 24"><rect width="24" height="24" rx="4" fill="#e3e6ff"/><path fill="#5b5ed0" d="M11 4c2-1 3 0 3 1l6 14c-3 2-5 0-8-8l-5 9c-4 1-4-1-3-3z"/><path fill="#7d7be4" d="M4 17c5-4 9-4 14-2-5 0-9 1-13 4z"/></svg></button>
                <time class="clock">10:49<br>2025/3/27</time>
            </div>
        </div>
    </div>

</body>
</html>
```
FILE: styles.css
```css
*, *::before, *::after {
    box-sizing: border-box;
    margin: 0;
    padding: 0;
}

html, body {
    height: 100%;
    overflow: hidden;
}

body {
    font-family: "Open Sans", "Noto Sans CJK SC", sans-serif;
    font-size: 12px;
    line-height: 16px;
    color: #d6d6d6;
    background: #020817;
    white-space: nowrap;
}

button, input, select {
    font: inherit;
    color: inherit;
    background: none;
    border: none;
    outline: none;
}

button {
    display: flex;
    align-items: center;
}

h1, h2, th {
    font-size: 12px;
    font-weight: 400;
}

i {
    font-style: normal;
}

/* icons */
.sprite {
    position: absolute;
    width: 0;
    height: 0;
}

svg {
    display: block;
    flex: none;
    fill: none;
    stroke: currentColor;
}

.icon {
    width: 16px;
    height: 16px;
}

.caret {
    width: 8px;
    height: 5px;
    stroke: none;
    color: #a0a0a0;
}

.caret.lg {
    width: 10px;
    height: 6px;
}

.b {
    stroke: #3b94f5;
}

.r {
    stroke: #e03c3c;
}

.w {
    stroke: #d2d2d2;
}

.bf {
    fill: #24476b;
}

.fb {
    fill: #3b94f5;
    stroke: none;
}

.fc {
    fill: currentColor;
    stroke: none;
}

.off, .off .caret {
    color: #727374;
}

.desktop {
    display: flex;
    height: 100vh;
}

/* side monitor */
.side-screen {
    flex: 0 0 265px;
    display: flex;
    flex-direction: column;
    background: linear-gradient(160deg, #020d20 0%, #010717 40%, #031028 75%, #020b1e 100%);
}

.preview-window {
    flex: 1;
    display: flex;
    flex-direction: column;
    margin: 77px 53px 128px 0;
    background: #202020;
    border: 1px solid #3a3b3d;
    border-left: none;
    border-radius: 0 10px 10px 0;
    overflow: hidden;
    color: #fff;
}

.pw-title {
    display: flex;
    justify-content: flex-end;
    gap: 42px;
    height: 50px;
    padding: 0 22px 14px 0;
    color: #8c8c8c;
}

.pw-search {
    height: 61px;
    padding: 10px 14px 10px 0;
    background: #2b2b2b;
    border-bottom: 1px solid #3e3e3e;
}

.pw-box {
    display: flex;
    align-items: center;
    height: 40px;
    padding-right: 16px;
    background: #383838;
    border-radius: 0 6px 6px 0;
}

.pw-box input {
    flex: 1;
    min-width: 0;
}

.pw-bar {
    display: flex;
    justify-content: flex-end;
    height: 58px;
    padding-right: 28px;
    background: #191919;
    border-bottom: 1px solid #3a3a3a;
}

.pw-preview {
    gap: 10px;
    font-size: 15px;
}

.pw-preview svg {
    width: 20px;
    height: 16px;
}

.pw-preview .cy {
    stroke: #4cc2ff;
}

.pw-empty {
    flex: 1;
    padding: 298px 0 0 1px;
    font-size: 15px;
    line-height: 20px;
}

.pw-foot {
    display: flex;
    justify-content: flex-end;
    height: 29px;
    padding-right: 5px;
    background: #1b1b1b;
}

.pw-foot button {
    padding: 0 4px;
}

.pw-foot .on {
    background: #4b4b4b;
    border: 1px solid #6e6e6e;
}

.pw-foot svg {
    width: 20px;
    height: 20px;
    stroke: #111;
}

.pw-foot .pg {
    fill: #c4c4c4;
    stroke: none;
}

.pw-foot .pw {
    fill: #fff;
}

.side-taskbar {
    display: flex;
    align-items: center;
    height: 50px;
    padding-right: 24px;
    background: #1b2029;
    border-top: 1px solid #3b4048;
    color: #fff;
}

.sync {
    width: 12px;
    height: 24px;
    margin-right: 18px;
}

.sync circle {
    fill: #ff9c1a;
    stroke: none;
}

.ime {
    margin-right: 21px;
    font-size: 20px;
}

.tray {
    width: 20px;
    height: 20px;
    margin-right: 10px;
    stroke-width: 2;
}

.tray .solid {
    fill: #fff;
    stroke: none;
}

.side-clock {
    margin-left: auto;
    font-size: 15px;
    line-height: 20px;
    text-align: right;
}

/* main screen */
.main-screen {
    flex: 1;
    min-width: 0;
    display: flex;
    flex-direction: column;
}

.app {
    flex: 1;
    min-height: 0;
    display: flex;
    flex-direction: column;
    background: #2d2e30;
    border-bottom: 1px solid #45464a;
}

.topbar {
    display: grid;
    grid-template-columns: 1fr auto 1fr;
    grid-template-rows: 20px 22px;
}

.logo {
    grid-area: 1 / 1 / 3 / 2;
    width: 36px;
    height: 36px;
    margin: 3px 0 0 9px;
    stroke: none;
}

.quick {
    grid-area: 1 / 1;
    display: flex;
    gap: 10px;
    padding-left: 55px;
}

.quick .icon + .caret {
    margin-left: 2px;
}

.app-title {
    grid-area: 1 / 2;
    padding-top: 3px;
}

.win-btns {
    grid-area: 1 / 3;
    display: flex;
    justify-content: flex-end;
    gap: 26px;
    padding-right: 9px;
    color: #a0a0a0;
}

.win-btns svg {
    width: 10px;
    height: 10px;
}

.tabs {
    grid-area: 2 / 1 / 3 / 3;
    display: flex;
    align-items: center;
    padding: 2px 0 0 50px;
}

.tabs button {
    height: 19px;
    padding: 0 13px;
    border-radius: 10px;
}

.tabs .active {
    background: #3b94f5;
    color: #fff;
}

.utils {
    grid-area: 2 / 3;
    display: flex;
    align-items: center;
    justify-content: flex-end;
    gap: 7px;
}

.app-search {
    display: flex;
    align-items: center;
    width: 149px;
    height: 17px;
    margin: 0 -4px 0 -3px;
    padding: 0 4px 0 2px;
    background: #1e1f21;
    border: 1px solid #38393b;
    border-radius: 3px;
    color: #8a8b8c;
}

.app-search input {
    flex: 1;
    min-width: 0;
}

input::placeholder {
    color: #77787a;
    opacity: 1;
}

.app-search .icon, .comp-search .icon {
    width: 12px;
    height: 12px;
}

/* ribbon */
.ribbon {
    display: flex;
    height: 101px;
    border-bottom: 1px solid #1b1c1e;
}

.group {
    position: relative;
    display: flex;
    flex-direction: column;
    padding: 2px 0 4px 8px;
}

.group::after {
    content: "";
    position: absolute;
    top: 1px;
    right: 0;
    bottom: 4px;
    width: 1px;
    background: #1d1e20;
}

.tools {
    display: grid;
    grid-auto-flow: column;
    grid-template-rows: repeat(3, 23px);
    height: 69px;
}

.tools button, .tools .check {
    display: flex;
    align-items: center;
    gap: 3px;
}

.tools .caret {
    margin-left: 5px;
}

.tools .big {
    grid-row: 1 / 4;
    flex-direction: column;
    justify-self: start;
    gap: 5px;
    padding-top: 2px;
}

.big svg {
    width: 30px;
    height: 30px;
    stroke-width: 2;
}

.big.active {
    width: 43px;
    height: 67px;
    margin-top: 1px;
    background: #4d4e50;
    border-radius: 3px;
}

.cursor {
    stroke: #3b94f5;
}

.group h2 {
    display: flex;
    align-items: center;
    justify-content: center;
    gap: 6px;
    margin: 8px 8px 0 0;
}

.g-select { width: 143px; }
.g-draw { width: 274px; }
.g-common { width: 219px; }
.g-modify { width: 76px; }
.g-paint { width: 225px; }
.g-detect { width: 168px; }
.g-table { width: 79px; }
.g-check { width: 242px; }
.g-brush { width: 127px; }

.g-select .tools { grid-template-columns: 46px 1fr; }
.g-draw .tools { grid-template-columns: 85px 85px 1fr; }
.g-common .tools { grid-template-columns: 135px 1fr; }
.g-modify .tools { grid-template-columns: 32px 1fr; padding-left: 4px; }
.g-paint .tools { grid-template-columns: 44px 84px 1fr; padding-left: 2px; }
.g-detect .tools { grid-template-columns: 58px 1fr; padding-left: 2px; }
.g-table .tools { grid-template-columns: 62px; padding-left: 3px; }
.g-check .tools { grid-template-columns: 111px 1fr; }
.g-brush .tools { grid-template-columns: 1fr; }

input[type="checkbox"] {
    appearance: none;
    position: relative;
    flex: none;
    width: 14px;
    height: 14px;
    background: #3c3d3f;
    border: 1px solid #7a7b7c;
    border-radius: 2px;
}

input[type="checkbox"]:disabled {
    background: #545557;
    border-color: #545557;
}

input[type="checkbox"]:checked::after {
    content: "";
    position: absolute;
    left: 4px;
    top: 0;
    width: 4px;
    height: 9px;
    border: solid #929394;
    border-width: 0 2px 2px 0;
    transform: rotate(40deg);
}

/* context row */
.context {
    display: flex;
    align-items: center;
    gap: 6px;
    height: 26px;
    padding: 0 7px 0 2px;
    background: #242527;
}

.combo {
    position: relative;
    width: 99px;
}

.combo::after {
    content: "";
    position: absolute;
    right: 5px;
    top: 10px;
    border: 3px solid transparent;
    border-top-color: #909192;
}

.combo select {
    appearance: none;
    display: block;
    width: 100%;
    height: 23px;
    padding: 0 10px 0 3px;
    border: 1px solid #343537;
    border-radius: 4px;
    color: #e8e8e8;
    background: #1d1e20;
    overflow: hidden;
}

.combo select:disabled {
    color: #6c6d6e;
    background: #242527;
    opacity: 1;
}

.notice {
    display: flex;
    align-items: center;
    gap: 4px;
    height: 24px;
    margin-left: auto;
    padding: 0 3px;
    border-radius: 3px;
    background: #fdeebc;
    color: #75705f;
}

.bell {
    width: 12px;
    height: 16px;
    fill: #fbbd1c;
    stroke: none;
}

.try {
    height: 18px;
    padding: 0 4px;
    border-radius: 3px;
    background: #fab905;
    color: #fff;
}

.dismiss {
    border-radius: 50%;
    background: #e6cf93;
    color: #fff;
}

.dismiss .icon {
    width: 12px;
    height: 12px;
}

/* workspace */
.work {
    flex: 1;
    min-height: 0;
    display: flex;
    padding-left: 1px;
    border-top: 1px solid #343537;
}

.panel {
    display: flex;
    flex-direction: column;
    background: #242527;
    border: 1px solid #1b1c1e;
}

.strip {
    display: flex;
    justify-content: flex-end;
    height: 11px;
    padding-right: 4px;
    background: #2d2e30;
    border-bottom: 1px solid #1b1c1e;
    color: #8a8b8c;
}

.strip .icon {
    width: 9px;
    height: 9px;
}

.panel-title {
    height: 22px;
    padding: 3px 7px;
    border-bottom: 1px solid #1b1c1e;
    color: #e6e6e6;
    font-weight: 500;
}

.nav {
    width: 162px;
    margin-right: 4px;
}

.nav-tools {
    display: flex;
    gap: 5px;
    height: 25px;
    padding: 0 4px;
    margin-bottom: 4px;
    border-bottom: 1px solid #1b1c1e;
}

.nav-list button {
    gap: 14px;
    width: 100%;
    height: 25px;
    margin-bottom: 3px;
    padding-left: 16px;
}

.nav-list svg {
    width: 18px;
    height: 18px;
    color: #3b94f5;
}

.nav-list .cat {
    padding-left: 2px;
    background: #363739;
}

.nav-list .active {
    background: #4f5052;
}

.middle {
    width: 470px;
    display: flex;
    flex-direction: column;
    background: #2d2e30;
    border-bottom: 20px solid #242527;
}

.components {
    height: 278px;
    margin-bottom: 4px;
}

.panel-tabs {
    display: flex;
    height: 23px;
    border-bottom: 1px solid #1b1c1e;
}

.panel-tabs button {
    padding: 0 8px;
    border-right: 1px solid #1b1c1e;
    background: #1f2021;
    color: #e6e6e6;
    font-weight: 500;
}

.panel-tabs .active {
    background: #38393b;
}

.panel-tabs .second {
    background: #323335;
}

.comp-tools {
    display: flex;
    gap: 6px;
    height: 27px;
    padding: 0 4px;
    border-bottom: 1px solid #1b1c1e;
}

.comp-tools button {
    gap: 4px;
}

.comp-search {
    display: flex;
    align-items: center;
    height: 20px;
    padding: 0 4px 0 1px;
    border-bottom: 1px solid #1b1c1e;
    color: #8a8b8c;
}

.comp-search input {
    flex: 1;
}

.tree {
    padding-top: 2px;
    list-style: none;
}

.tree li {
    display: flex;
    align-items: center;
    gap: 2px;
    height: 24px;
}

.tree .l1 { padding-left: 13px; }
.tree .l2 { padding-left: 33px; }
.tree .l3 { padding-left: 60px; }

.node {
    display: flex;
    gap: 5px;
    width: 208px;
    height: 21px;
    padding: 2px 3px;
}

.node.active {
    background: #606060;
}

.node i, .key td:nth-child(2) {
    color: #2a8df0;
}

.props {
    flex: 1;
    min-height: 0;
}

table {
    width: 100%;
    border-collapse: collapse;
    table-layout: fixed;
}

th, td {
    height: 21px;
    padding: 0 2px;
    line-height: 16px;
    border: 1px solid #1b1c1e;
    border-top: none;
    border-left: none;
    text-align: left;
    color: #dcdcdc;
}

th {
    background: #2d2e30;
    text-align: center;
}

.num { width: 22px; }
.name { width: 115px; }

tbody th {
    padding: 0;
}

.expand {
    display: inline-flex;
    margin-right: 6px;
    border: 1px solid #8a8b8c;
    border-radius: 2px;
    vertical-align: middle;
}

.expand svg {
    width: 10px;
    height: 10px;
}

.splitter {
    display: flex;
    flex: 0 0 5px;
    flex-direction: column;
    justify-content: center;
    background: #2d2e30;
}

.splitter::before {
    content: "";
    height: 100px;
    background: #5a6570;
}

/* model canvas */
.canvas {
    position: relative;
    flex: 1;
    min-width: 0;
    background: #000;
    overflow: hidden;
}

.scene {
    width: 100%;
    height: 100%;
}

.axis { stroke: #56560a; }
.axis .dim { stroke: #33330a; }
.wire { stroke: #777; }
.base { fill: #7f7fff; stroke: none; }
.scribble { stroke: #3c3c8c; }
.beam { fill: #554a78; stroke: none; }
.pipe { fill: #9d89d6; stroke: none; }
.clear { fill: #a68ff0; fill-opacity: .7; }
.joint { fill: #c9705f; stroke: none; fill-opacity: .9; }
.dark-line { stroke: #960096; stroke-width: 3; }
.magenta { stroke: #f0f; stroke-width: 3; }
.teal { stroke: #008f8f; stroke-width: 3; }
.cyan { stroke: #0ff; stroke-width: 3; }
.yellow { stroke: #ff0; stroke-width: 3; }
.picked { stroke: #0080ff; stroke-width: 3; }
.grip { fill: #0f0; stroke: none; }
.mark { stroke: #ff2010; stroke-width: 4; }
.arrow { fill: #ff2010; stroke: none; }
.gizmo { stroke: none; stroke-width: 1; }

.viewtools {
    position: absolute;
    top: 0;
    right: 0;
    display: flex;
    flex-direction: column;
    align-items: center;
    gap: 9px;
    width: 33px;
    padding: 12px 0 13px;
    background: #363739;
    border: 1px solid #48494b;
}

.viewtools button svg {
    width: 20px;
    height: 20px;
}

.viewtools .caret {
    margin: -3px 0 -2px;
    color: #5a6270;
}

.viewtools hr {
    width: 23px;
    margin: -2px 0 0;
    border: none;
    border-top: 1px solid #6c6d6e;
}

.viewtools text {
    fill: #3b94f5;
    stroke: none;
    font-size: 8px;
    font-weight: 700;
}

.prompt {
    position: absolute;
    left: 0;
    right: 0;
    bottom: 0;
    display: flex;
    align-items: center;
    justify-content: center;
    gap: 3px;
    height: 27px;
    background: rgba(52, 52, 52, .8);
    color: #fff;
    font-weight: 500;
}

/* display settings */
.display {
    width: 212px;
    overflow: hidden;
}

.display .strip {
    padding-right: 0;
}

.display-tabs {
    display: flex;
    gap: 5px;
    height: 29px;
    padding: 4px 0 0 2px;
    border-bottom: 1px solid #1b1c1e;
}

.display-tabs button {
    padding: 0 6px;
    border-radius: 3px 3px 0 0;
    background: #1f2021;
}

.display-tabs .active {
    background: #38393b;
}

.radios {
    display: flex;
    align-items: center;
    gap: 7px;
    height: 29px;
    padding-left: 6px;
    border-bottom: 1px solid #343537;
}

.radios label {
    display: flex;
    align-items: center;
    gap: 7px;
}

input[type="radio"] {
    appearance: none;
    width: 14px;
    height: 14px;
    border: 1px solid #7a7b7c;
    border-radius: 50%;
    background: #3c3d3f;
}

input[type="radio"]:checked {
    border-color: #1c78c0;
    background: radial-gradient(#0d83da 3px, #3c3d3f 4px);
}

.floors {
    position: relative;
    flex: 1;
    min-height: 0;
    padding-top: 3px;
    overflow: hidden;
    color: #7c7d7e;
    border-bottom: 1px solid #343537;
}

/* scroll thumb */
.floors::after {
    content: "";
    position: absolute;
    top: 16px;
    right: 0;
    width: 8px;
    height: 82%;
    border-radius: 4px;
    background: #3a3b3d;
}

.floors label {
    display: flex;
    align-items: center;
    gap: 7px;
    height: 24px;
    padding-left: 44px;
}

.floors .root {
    padding-left: 8px;
}

.other {
    display: flex;
    align-items: center;
    gap: 2px;
    height: 38px;
}

/* status bar */
.status {
    display: flex;
    align-items: center;
    height: 31px;
    padding-left: 2px;
}

.s1 { width: 120px; }
.s2 { width: 140px; }
.s3 { width: 110px; }

.modes {
    display: flex;
    gap: 3px;
    margin-right: 6px;
}

.modes button, .zoomer button {
    justify-content: center;
    width: 25px;
    height: 25px;
    background: #242527;
    border: 1px solid #414244;
    border-radius: 3px;
}

.modes .wide {
    gap: 4px;
    width: 36px;
}

.modes .caret {
    color: #77787a;
}

.modes .on {
    background: #2a3a4c;
    border-color: #3b84da;
}

.zoomer {
    display: flex;
    align-items: center;
    margin-left: 9px;
}

input[type="range"] {
    appearance: none;
    width: 45px;
    height: 18px;
    background: linear-gradient(#a8a9aa, #a8a9aa) center / 100% 2px no-repeat;
}

input[type="range"]::-webkit-slider-thumb {
    appearance: none;
    width: 9px;
    height: 18px;
    border: 1px solid #8a8b8c;
    border-radius: 2px;
    background: #55565a;
}

/* main taskbar */
.taskbar {
    display: flex;
    align-items: center;
    gap: 20px;
    height: 37px;
    padding: 11px 17px 0 21px;
    background: linear-gradient(90deg, #1b2230 0%, #1b2138 10%, #18214a 22%, #141f64 32%, #12265a 37%, #12205f 48%, #1c1e3d 53%, #10235a 61%, #10205a 68%, #1e2030 74%, #1a222b 100%);
    overflow: hidden;
    color: #fff;
}

.taskbar svg {
    stroke: none;
}

.taskbar button {
    height: 24px;
}

.taskbar button svg {
    width: 24px;
    height: 24px;
}

.task-search {
    display: flex;
    flex: none;
    align-items: center;
    gap: 8px;
    width: 219px;
    height: 34px;
    margin: 0 -8px;
    padding: 0 1px 0 10px;
    border: 1px solid #545a68;
    border-radius: 17px;
    background: #3a3f4d;
}

.task-search .icon {
    stroke: #d2d2d2;
    stroke-width: 2;
}

.task-search input {
    flex: 1;
    min-width: 0;
    font-size: 14px;
}

.task-search input::placeholder {
    color: #e0e0e0;
}

.doodle {
    width: 54px;
    height: 28px;
}

.taskbar .active {
    height: 34px;
    margin: 0 -8px;
    padding: 0 8px;
    border: 1px solid #2e3668;
    border-radius: 4px;
    background: #1e2756;
}

.clock {
    align-self: flex-end;
    margin-left: auto;
    font-size: 12px;
    line-height: 16px;
    text-align: right;
}
```
